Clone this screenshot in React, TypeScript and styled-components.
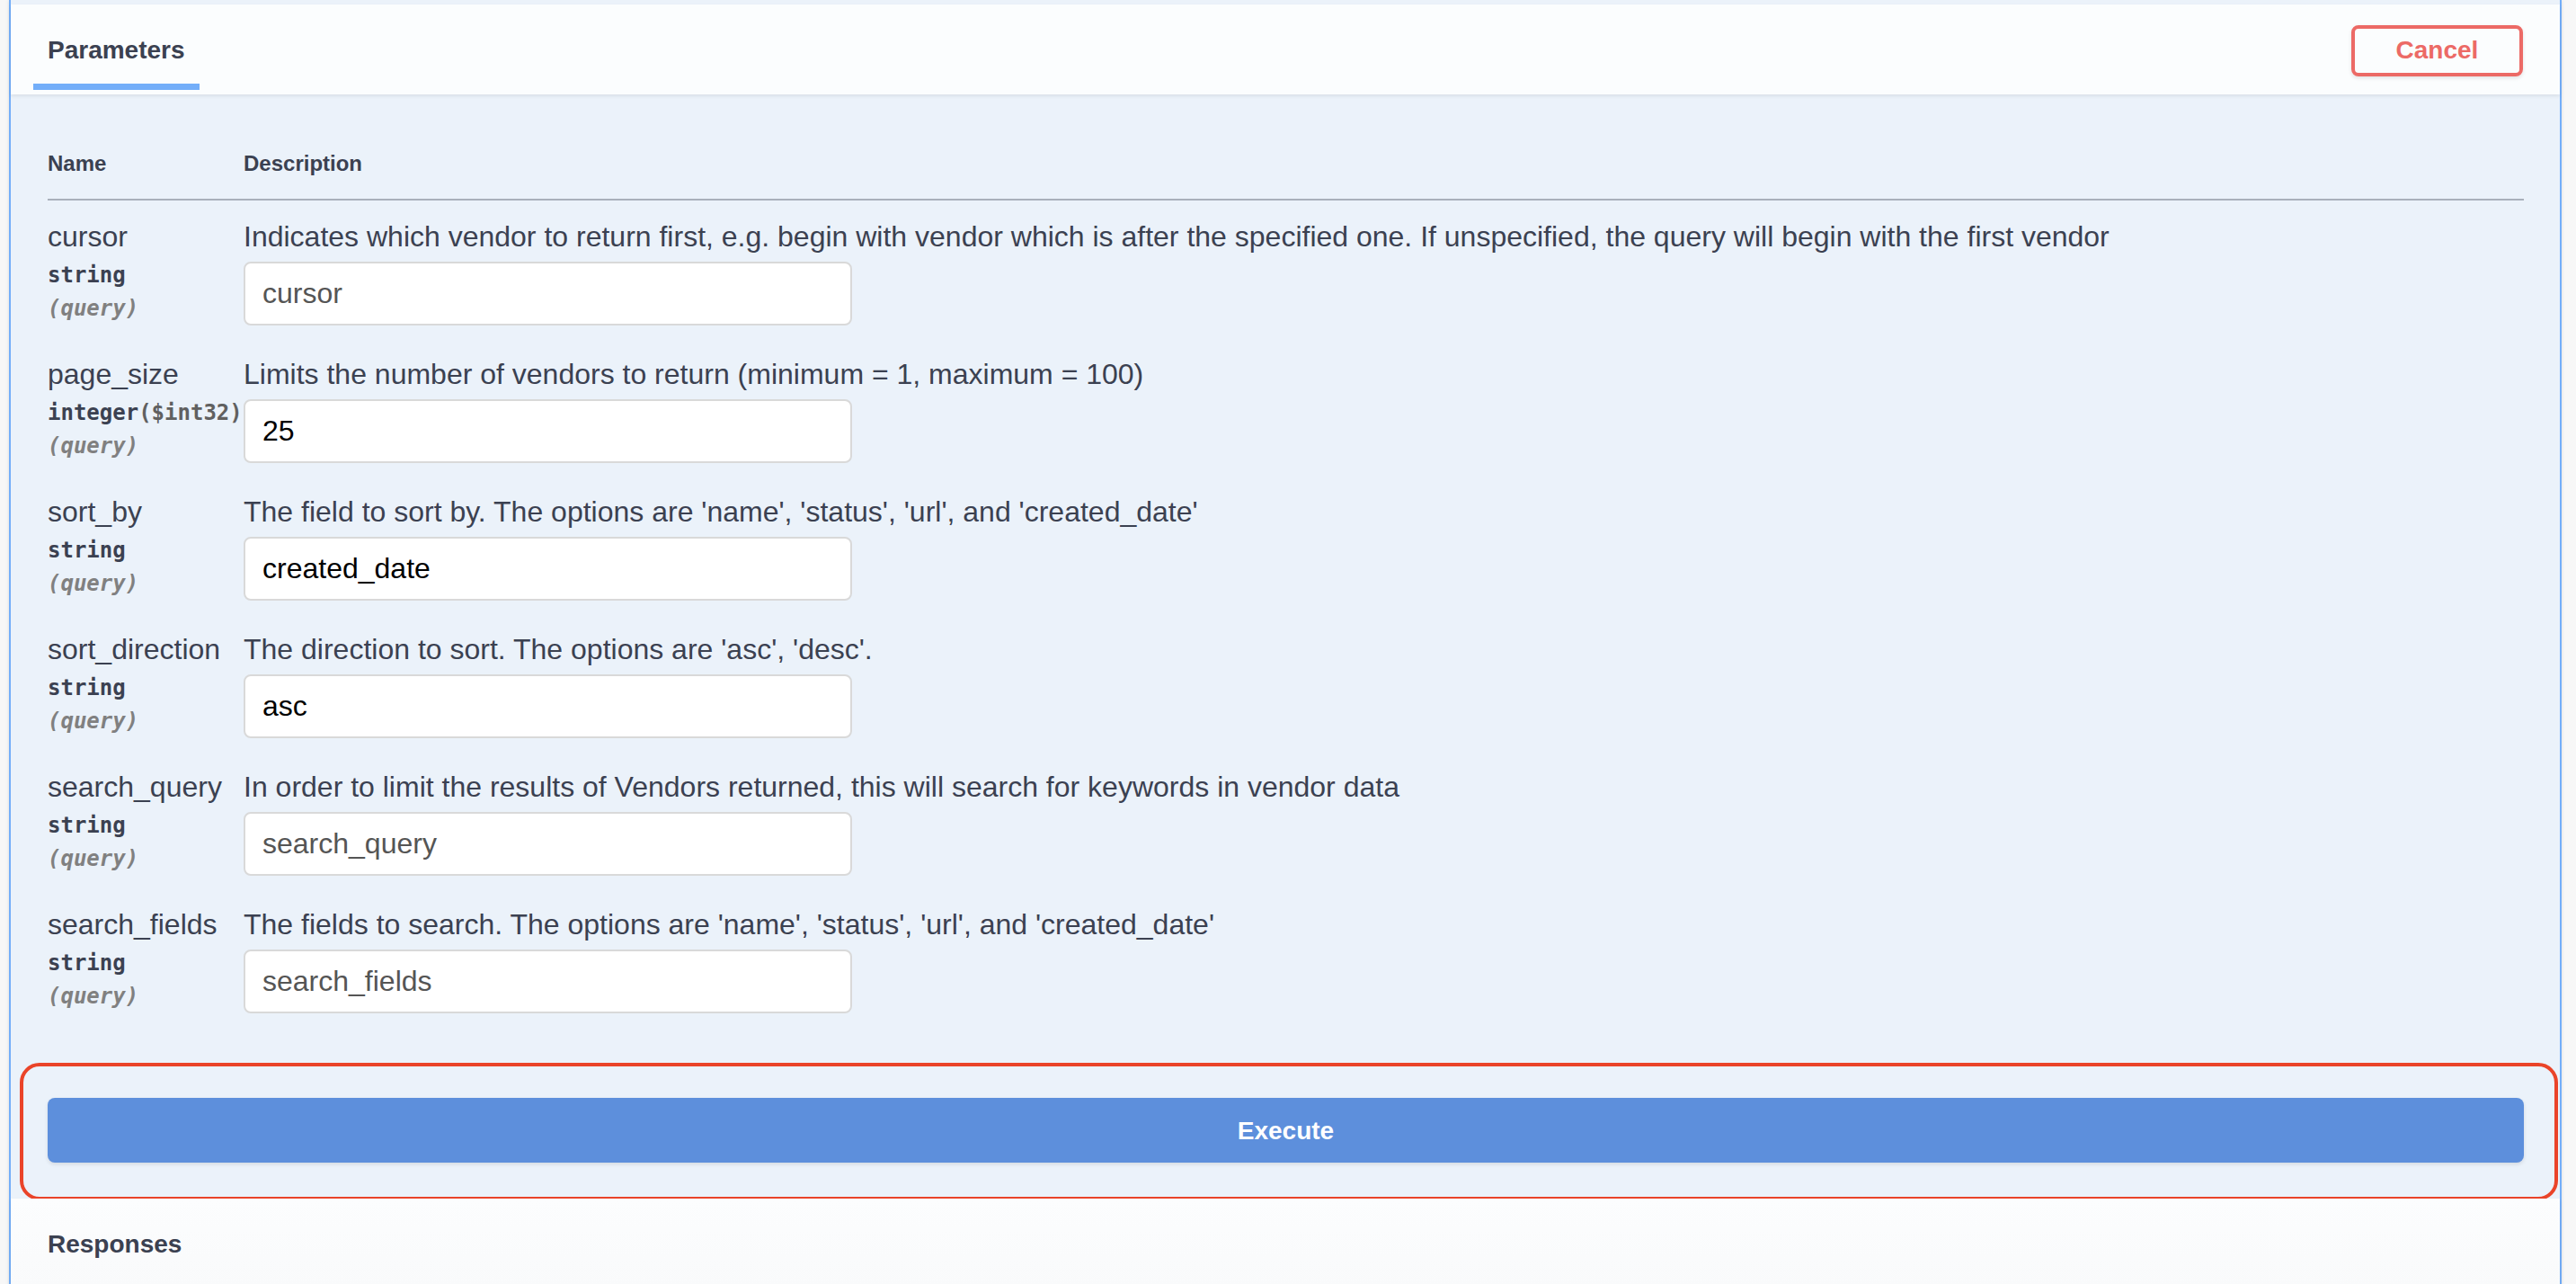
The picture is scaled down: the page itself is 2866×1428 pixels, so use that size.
import React from 'react';
import styled, { createGlobalStyle } from 'styled-components';

const GlobalStyle = createGlobalStyle`
  html, body {
    margin: 0;
    padding: 0;
    background: #f7f7f7;
    font-family: 'Liberation Sans', Arial, Helvetica, sans-serif;
    color: #3b4151;
  }
  * {
    box-sizing: border-box;
  }
`;

interface Param {
  name: string;
  type: string;
  format?: string;
  description: string;
  value?: string;
}

const params: Param[] = [
  {
    name: 'cursor',
    type: 'string',
    description:
      'Indicates which vendor to return first, e.g. begin with vendor which is after the specified one. If unspecified, the query will begin with the first vendor',
  },
  {
    name: 'page_size',
    type: 'integer',
    format: '($int32)',
    description: 'Limits the number of vendors to return (minimum = 1, maximum = 100)',
    value: '25',
  },
  {
    name: 'sort_by',
    type: 'string',
    description: "The field to sort by. The options are 'name', 'status', 'url', and 'created_date'",
    value: 'created_date',
  },
  {
    name: 'sort_direction',
    type: 'string',
    description: "The direction to sort. The options are 'asc', 'desc'.",
    value: 'asc',
  },
  {
    name: 'search_query',
    type: 'string',
    description: 'In order to limit the results of Vendors returned, this will search for keywords in vendor data',
  },
  {
    name: 'search_fields',
    type: 'string',
    description: "The fields to search. The options are 'name', 'status', 'url', and 'created_date'",
  },
];

const Page = styled.div`
  padding: 0 16px 0 10px;
`;

const OpBlock = styled.div`
  background: #ebf2fa;
  border-left: 2px solid #73aef9;
  border-right: 2px solid #73aef9;
  padding-top: 5px;
  box-shadow: 0 0 4px rgba(0, 0, 0, 0.12);
`;

const SectionHeader = styled.div`
  height: 100px;
  display: flex;
  align-items: center;
  justify-content: space-between;
  padding: 2px 41px 0 25px;
  background: rgba(255, 255, 255, 0.8);
  box-shadow: 0 2px 4px rgba(0, 0, 0, 0.08);
  position: relative;
`;

const SectionTitle = styled.h4<{ $tab?: boolean }>`
  margin: 0;
  font-size: 28px;
  font-weight: 700;
  color: #3b4151;
  align-self: stretch;
  display: flex;
  align-items: center;
  padding: ${(p) => (p.$tab ? '0 16px' : '0 0 0 16px')};
  position: relative;

  &::after {
    content: '';
    display: ${(p) => (p.$tab ? 'block' : 'none')};
    position: absolute;
    left: 0;
    right: 0;
    bottom: 5px;
    height: 7px;
    background: #73aef9;
  }
`;

const CancelButton = styled.button`
  width: 191px;
  height: 57px;
  border: 4px solid #ec6a66;
  border-radius: 8px;
  background: transparent;
  color: #ec6a66;
  font-family: 'Liberation Sans', Arial, sans-serif;
  font-size: 28px;
  font-weight: 700;
  box-shadow: 0 2px 4px rgba(0, 0, 0, 0.1);
  cursor: pointer;
`;

const Body = styled.div`
  padding: 62px 40px 0 41px;
`;

const TableHead = styled.div`
  display: grid;
  grid-template-columns: 218px 1fr;
  font-size: 24px;
  font-weight: 700;
  line-height: 30px;
  padding-bottom: 24px;
  border-bottom: 2px solid #a9b0bb;
`;

const Row = styled.div`
  display: grid;
  grid-template-columns: 218px 1fr;
  padding: 20px 0 14px;
`;

const NameCol = styled.div`
  display: flex;
  flex-direction: column;
`;

const ParamName = styled.div`
  font-size: 32px;
  line-height: 40px;
  white-space: nowrap;
`;

const ParamType = styled.div`
  font-family: 'DejaVu Sans Mono', 'Liberation Mono', monospace;
  font-size: 24px;
  font-weight: 700;
  line-height: 30px;
  margin-top: 8px;
  white-space: nowrap;
`;

const ParamFormat = styled.span`
  color: #606060;
`;

const ParamIn = styled.div`
  font-family: 'DejaVu Sans Mono', 'Liberation Mono', monospace;
  font-size: 24px;
  font-weight: 700;
  font-style: italic;
  color: #808080;
  line-height: 30px;
  margin-top: 7px;
`;

const DescCol = styled.div`
  display: flex;
  flex-direction: column;
  align-items: flex-start;
`;

const Description = styled.p`
  margin: 0;
  font-size: 32px;
  line-height: 40px;
  white-space: nowrap;
`;

const TextInput = styled.input`
  margin-top: 8px;
  width: 677px;
  height: 71px;
  border: 2px solid #d9d9d9;
  border-radius: 8px;
  background: #fff;
  padding: 0 19px;
  font-family: 'Liberation Sans', Arial, sans-serif;
  font-size: 32px;
  color: #000;
  outline: none;

  &::placeholder {
    color: #555555;
    opacity: 1;
  }
`;

const ExecuteWrapper = styled.div`
  position: relative;
  padding: 80px 40px 40px 41px;
`;

const ExecuteButton = styled.button`
  display: block;
  width: 100%;
  height: 72px;
  border: none;
  border-radius: 8px;
  background: #5d8fdc;
  color: #fff;
  font-family: 'Liberation Sans', Arial, sans-serif;
  font-size: 28px;
  font-weight: 700;
  padding-top: 2px;
  box-shadow: 0 2px 4px rgba(0, 0, 0, 0.1);
  cursor: pointer;
`;

const Highlight = styled.div`
  position: absolute;
  left: 10px;
  right: 2px;
  top: 41px;
  bottom: -2px;
  border: 4px solid #ea4429;
  border-radius: 22px;
  pointer-events: none;
`;

const ResponsesHeader = styled(SectionHeader)`
  background: linear-gradient(#fcfdfe, #f9fafb);
`;

export default function App() {
  return (
    <>
      <GlobalStyle />
      <Page>
        <OpBlock>
          <SectionHeader>
            <SectionTitle $tab>Parameters</SectionTitle>
            <CancelButton>Cancel</CancelButton>
          </SectionHeader>
          <Body>
            <TableHead>
              <div>Name</div>
              <div>Description</div>
            </TableHead>
            {params.map((p) => (
              <Row key={p.name}>
                <NameCol>
                  <ParamName>{p.name}</ParamName>
                  <ParamType>
                    {p.type}
                    {p.format && <ParamFormat>{p.format}</ParamFormat>}
                  </ParamType>
                  <ParamIn>(query)</ParamIn>
                </NameCol>
                <DescCol>
                  <Description>{p.description}</Description>
                  <TextInput placeholder={p.name} defaultValue={p.value} />
                </DescCol>
              </Row>
            ))}
          </Body>
          <ExecuteWrapper>
            <ExecuteButton>Execute</ExecuteButton>
            <Highlight />
          </ExecuteWrapper>
          <ResponsesHeader>
            <SectionTitle>Responses</SectionTitle>
          </ResponsesHeader>
        </OpBlock>
      </Page>
    </>
  );
}
